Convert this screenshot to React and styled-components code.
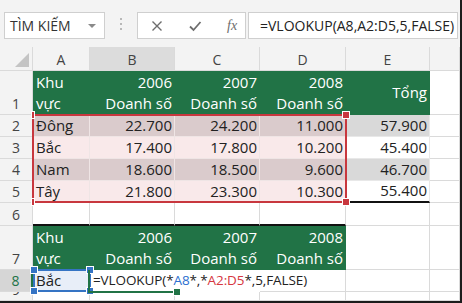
import React from 'react';
import styled, { createGlobalStyle, css } from 'styled-components';

const Global = createGlobalStyle`
  html, body { margin: 0; padding: 0; background: #fff; }
  body { font-family: "Open Sans", "Noto Sans", sans-serif; }
`;

const GREEN = '#217346';
const LINE = '#dadada';

const Frame = styled.div`
  width: 462px;
  height: 303px;
  box-sizing: border-box;
  border-right: 2px solid #1c1c1c;
  border-bottom: 2px solid #1c1c1c;
  overflow: hidden;
  display: flex;
  flex-direction: column;
  background: #fff;
`;

const Toolbar = styled.div`
  height: 47px;
  flex: none;
  box-sizing: border-box;
  background: #f3f3f3;
  display: flex;
  align-items: flex-start;
  padding: 12px 2px 0 4px;
`;

const NameBox = styled.div`
  width: 101px;
  height: 27px;
  box-sizing: border-box;
  background: #fff;
  border: 1px solid #cfcfcf;
  display: flex;
  align-items: center;
  justify-content: space-between;
  padding: 0 8px 0 5px;
  font-size: 14px;
  color: #333;
`;

const Caret = styled.span`
  width: 0;
  height: 0;
  border-left: 4px solid transparent;
  border-right: 4px solid transparent;
  border-top: 4px solid #8a8a8a;
`;

const Grip = styled.div`
  width: 2px;
  margin: 6px 15px 0 15px;
  height: 14px;
  background: repeating-linear-gradient(to bottom, #b8b8b8 0 2px, transparent 2px 5px);
`;

const IconBox = styled.div`
  width: 109px;
  height: 27px;
  box-sizing: border-box;
  background: #fff;
  border: 1px solid #cfcfcf;
  display: flex;
  align-items: center;
  padding-left: 13px;
  gap: 25px;
`;

const Fx = styled.span`
  font-family: "Liberation Serif", serif;
  font-style: italic;
  font-size: 14px;
  color: #6d6d6d;
`;

const FormulaBox = styled.div`
  flex: 1;
  margin-left: 2px;
  height: 27px;
  box-sizing: border-box;
  background: #fff;
  border: 1px solid #cfcfcf;
  display: flex;
  align-items: center;
  padding-left: 11px;
  font-size: 14px;
  color: #222;
  white-space: nowrap;
`;

const Sheet = styled.div`
  flex: 1;
  min-height: 0;
  display: grid;
  grid-template: 1fr / 1fr;
  font-size: 15px;
`;

const layerTemplate = css`
  grid-area: 1 / 1;
  display: grid;
  grid-template-columns: 33px 57px 85px 85px 86px 84px 1fr;
  grid-template-rows: 24px 44px 22px 22px 22px 22px 23px 44px 22px 1fr;
  min-height: 0;
`;

const CellLayer = styled.div`
  ${layerTemplate}
`;

const OverlayLayer = styled.div`
  ${layerTemplate}
  pointer-events: none;
  z-index: 2;
`;

const Corner = styled.div`
  background: #f3f3f3;
  border-right: 1px solid ${LINE};
  border-bottom: 1px solid ${LINE};
  box-sizing: border-box;
  display: flex;
  justify-content: flex-end;
  align-items: flex-end;
  padding: 0 3px 3px 0;
`;

const Tri = styled.div`
  width: 0;
  height: 0;
  border-left: 14px solid transparent;
  border-bottom: 14px solid #c4c4c4;
`;

const ColHead = styled.div`
  box-sizing: border-box;
  background: ${p => (p.$active ? '#dcdcdc' : '#f3f3f3')};
  border-right: 1px solid ${LINE};
  border-bottom: 1px solid ${LINE};
  display: flex;
  align-items: center;
  justify-content: center;
  font-size: 14px;
  color: #444;
  padding-top: 2px;
`;

const RowHead = styled.div`
  box-sizing: border-box;
  background: ${p => (p.$active ? '#d6d6d6' : '#f3f3f3')};
  border-right: ${p => (p.$active ? `2px solid ${GREEN}` : `1px solid ${LINE}`)};
  border-bottom: 1px solid ${LINE};
  display: flex;
  align-items: flex-end;
  justify-content: center;
  font-size: 14px;
  line-height: 20px;
  color: ${p => (p.$active ? GREEN : '#444')};
  overflow: hidden;
`;

const Cell = styled.div`
  box-sizing: border-box;
  background: ${p => p.$bg || '#fff'};
  color: ${p => p.$fg || '#222'};
  border-right: 1px solid ${p => p.$line || LINE};
  border-bottom: ${p => p.$bottom || `1px solid ${p.$line || LINE}`};
  display: flex;
  flex-direction: column;
  justify-content: ${p => (p.$middle ? 'center' : 'flex-end')};
  align-items: ${p => (p.$right ? 'flex-end' : 'flex-start')};
  padding: 0 2px 0 3px;
  line-height: 21px;
  white-space: nowrap;
  overflow: ${p => (p.$spill ? 'visible' : 'hidden')};
  position: relative;
  z-index: ${p => (p.$spill ? 1 : 0)};
`;

const FormulaText = styled.span`
  font-size: 13.5px;
  letter-spacing: -0.1px;
`;

const Overlay = styled.div`
  grid-column: ${p => p.$col};
  grid-row: ${p => p.$row};
  position: relative;
`;

const RangeBox = styled(Overlay)`
  margin: -1px -1px 0 -1px;
  border: 2px solid #c8373e;
`;

const Handle = styled.span`
  position: absolute;
  width: ${p => p.$w || 6}px;
  height: 6px;
  background: ${p => p.$c};
  border: 1px solid #fff;
  box-sizing: content-box;
  ${p => (p.$top ? 'top: -5px;' : 'bottom: -5px;')}
  ${p => (p.$left ? `left: -${p.$lo ?? 5}px;` : 'right: -5px;')}
`;

const SelBox = styled(Overlay)`
  margin: -1px -1px 0 0;
  border: 2px solid #3574c4;
`;

const EditBox = styled(Overlay)`
  margin: 0 -1px -1px -2px;
  border-left: 2px solid ${GREEN};
  border-bottom: 2px solid ${GREEN};
`;

const Blue = styled.span`color: #2d6fd0;`;
const Red = styled.span`color: #d6373f;`;

const CheckIcon = () => (
  <svg width="14" height="14" viewBox="0 0 14 14">
    <path d="M2 7.5 L5.5 11 L12.5 3" fill="none" stroke="#6d6d6d" strokeWidth="1.8" />
  </svg>
);
const CloseIcon = () => (
  <svg width="12" height="12" viewBox="0 0 12 12">
    <path d="M1.5 1.5 L10.5 10.5 M10.5 1.5 L1.5 10.5" fill="none" stroke="#6d6d6d" strokeWidth="1.4" />
  </svg>
);

const data = [
  ['Đông', '22.700', '24.200', '11.000', '57.900'],
  ['Bắc', '17.400', '17.800', '10.200', '45.400'],
  ['Nam', '18.600', '18.500', '9.600', '46.700'],
  ['Tây', '21.800', '23.300', '10.300', '55.400'],
];

const years = ['2006', '2007', '2008'];

const HeaderBlock = ({ withTotal }) => (
  <>
    <Cell $bg={GREEN} $fg="#fff" $line={GREEN}>
      <span>Khu</span>
      <span>vực</span>
    </Cell>
    {years.map(y => (
      <Cell key={y} $bg={GREEN} $fg="#fff" $line={GREEN} $right>
        <span>{y}</span>
        <span>Doanh số</span>
      </Cell>
    ))}
    {withTotal ? (
      <Cell $bg={GREEN} $fg="#fff" $line={GREEN} $right $middle>Tổng</Cell>
    ) : (
      <Cell />
    )}
    <Cell />
  </>
);

export default function App() {
  return (
    <>
      <Global />
      <Frame>
        <Toolbar>
          <NameBox>
            <span>TÌM KIẾM</span>
            <Caret />
          </NameBox>
          <Grip />
          <IconBox>
            <CloseIcon />
            <CheckIcon />
            <Fx>fx</Fx>
          </IconBox>
          <FormulaBox>=VLOOKUP(A8,A2:D5,5,FALSE)</FormulaBox>
        </Toolbar>
        <Sheet>
          <CellLayer>
            <Corner><Tri /></Corner>
            {['A', 'B', 'C', 'D', 'E', ''].map((c, i) => (
              <ColHead key={i} $active={c === 'B'}>{c}</ColHead>
            ))}

            <RowHead>1</RowHead>
            <HeaderBlock withTotal />

            {data.map((r, i) => {
              const odd = i % 2 === 0;
              const bg = odd ? '#dacbcc' : '#f9e9ea';
              const eBg = odd ? '#d9d9d9' : '#fff';
              return (
                <React.Fragment key={r[0]}>
                  <RowHead>{i + 2}</RowHead>
                  <Cell $bg={bg} $line="#efe5e5">{r[0]}</Cell>
                  <Cell $bg={bg} $line="#efe5e5" $right>{r[1]}</Cell>
                  <Cell $bg={bg} $line="#efe5e5" $right>{r[2]}</Cell>
                  <Cell $bg={bg} $line="#efe5e5" $right>{r[3]}</Cell>
                  <Cell
                    $bg={eBg}
                    $line="#e8e8e8"
                    $right
                    $bottom={i === 3 ? '2px solid #111' : undefined}
                  >
                    {r[4]}
                  </Cell>
                  <Cell />
                </React.Fragment>
              );
            })}

            <RowHead>6</RowHead>
            <Cell $bottom="2px solid #111" />
            <Cell $bottom="2px solid #111" />
            <Cell $bottom="2px solid #111" />
            <Cell $bottom="2px solid #111" />
            <Cell />
            <Cell />

            <RowHead>7</RowHead>
            <HeaderBlock />

            <RowHead $active>8</RowHead>
            <Cell $bg="#e8eef8">Bắc</Cell>
            <Cell $spill $line="#fff">
              <FormulaText>
                =VLOOKUP(*<Blue>A8</Blue>*,*<Red>A2:D5</Red>*,5,FALSE)
              </FormulaText>
            </Cell>
            <Cell $line="#fff" />
            <Cell />
            <Cell />
            <Cell />

            <RowHead>9</RowHead>
            <Cell />
            <Cell />
            <Cell />
            <Cell />
            <Cell />
            <Cell />
          </CellLayer>

          <OverlayLayer>
            <RangeBox $col="2 / 6" $row="3 / 7">
              <Handle $c="#c8373e" $top $left $w={2} $lo={3} />
              <Handle $c="#c8373e" $top />
              <Handle $c="#c8373e" $left $w={2} $lo={3} />
              <Handle $c="#c8373e" />
            </RangeBox>
            <SelBox $col="2" $row="9">
              <Handle $c="#3574c4" $top $left />
              <Handle $c="#3574c4" $top />
              <Handle $c="#3574c4" $left />
              <Handle $c="#3574c4" />
            </SelBox>
            <EditBox $col="3" $row="9">
              <Handle $c={GREEN} />
            </EditBox>
          </OverlayLayer>
        </Sheet>
      </Frame>
    </>
  );
}
